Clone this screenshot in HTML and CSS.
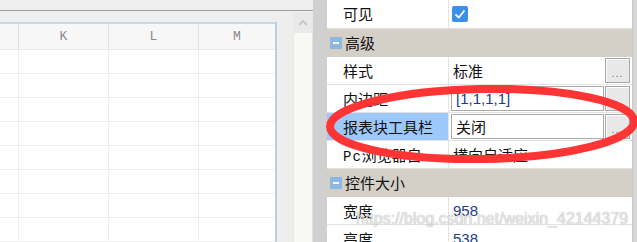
FILE: index.html
```html
<!DOCTYPE html>
<html lang="zh-CN">
<head>
  <meta charset="UTF-8">
  <title>报表属性</title>
  <link rel="stylesheet" href="styles.css">
</head>
<body>

<div class="left">
  <div class="toolbar"></div>
  <div class="workarea">
    <div class="sheet">
      <div class="sheet-row head">
        <div class="cell"></div>
        <div class="cell">K</div>
        <div class="cell">L</div>
        <div class="cell">M</div>
      </div>
      <div class="sheet-row"><div class="cell"></div><div class="cell"></div><div class="cell"></div><div class="cell"></div></div>
      <div class="sheet-row"><div class="cell"></div><div class="cell"></div><div class="cell"></div><div class="cell"></div></div>
      <div class="sheet-row"><div class="cell"></div><div class="cell"></div><div class="cell"></div><div class="cell"></div></div>
      <div class="sheet-row"><div class="cell"></div><div class="cell"></div><div class="cell"></div><div class="cell"></div></div>
      <div class="sheet-row"><div class="cell"></div><div class="cell"></div><div class="cell"></div><div class="cell"></div></div>
      <div class="sheet-row"><div class="cell"></div><div class="cell"></div><div class="cell"></div><div class="cell"></div></div>
      <div class="sheet-row"><div class="cell"></div><div class="cell"></div><div class="cell"></div><div class="cell"></div></div>
      <div class="sheet-row"><div class="cell"></div><div class="cell"></div><div class="cell"></div><div class="cell"></div></div>
    </div>
    <div class="vscroll">
      <div class="vscroll-btn">
        <svg width="12" height="8" viewBox="0 0 12 8"><path d="M2 6 L6 2 L10 6" fill="none" stroke="#c8c8c8" stroke-width="2"/></svg>
      </div>
      <div class="vscroll-track"></div>
    </div>
  </div>
</div>

<div class="splitter"></div>

<div class="props">
  <div class="prop first">
    <div class="prop-name">可见</div>
    <div class="prop-value">
      <span class="checkbox">
        <svg width="16" height="16" viewBox="0 0 16 16"><path d="M3.5 8.5 L6.8 11.5 L12.5 4.5" fill="none" stroke="#fff" stroke-width="1.8"/></svg>
      </span>
    </div>
  </div>

  <div class="group"><span class="minus"></span>高级</div>

  <div class="prop">
    <div class="prop-name">样式</div>
    <div class="prop-value"><span class="plain">标准</span><span class="dots">...</span></div>
  </div>
  <div class="prop">
    <div class="prop-name">内边距</div>
    <div class="prop-value"><span class="field num">[1,1,1,1]</span><span class="dots">...</span></div>
  </div>
  <div class="prop">
    <div class="prop-name selected">报表块工具栏</div>
    <div class="prop-value"><span class="field">关闭</span><span class="dots">...</span></div>
  </div>
  <div class="prop">
    <div class="prop-name"><span class="latin">Pc</span>浏览器自</div>
    <div class="prop-value"><span class="plain">横向自适应</span></div>
  </div>

  <div class="group"><span class="minus"></span>控件大小</div>

  <div class="prop">
    <div class="prop-name">宽度</div>
    <div class="prop-value"><span class="plain num">958</span></div>
  </div>
  <div class="prop">
    <div class="prop-name">高度</div>
    <div class="prop-value"><span class="plain num">538</span></div>
  </div>
</div>

<div class="edge"></div>

<!-- annotation drawn over the screenshot -->
<svg class="mark" width="637" height="242" viewBox="0 0 637 242">
  <ellipse cx="482" cy="124" rx="152" ry="35" fill="none" stroke="#ff3535" stroke-width="8" transform="rotate(-1 482 124)"/>
</svg>
<div class="watermark">https://blog.csdn.net/weixin_42144379</div>

</body>
</html>
```

FILE: styles.css
```css
* {
  box-sizing: border-box;
  margin: 0;
  padding: 0;
}
body {
  width: 637px;
  height: 242px;
  overflow: hidden;
  display: flex;
  position: relative;
  font-family: "Noto Sans CJK SC", "Liberation Sans", sans-serif;
  background-color: #efefef;
}

/* left: sheet designer */
.left {
  width: 313px;
  display: flex;
  flex-direction: column;
}
.toolbar {
  height: 21px;
  background-color: #efefef;
  border-bottom: 1px solid #9d9d9d;
}
.workarea {
  flex: 1;
  display: flex;
  background-color: #eeeeee;
}
.sheet {
  width: 277px;
  margin-top: 11px;
  background-color: #fff;
  border-top: 2px solid #c6d7ea;
  border-right: 2px solid #b8cde6;
}
.sheet-row {
  display: grid;
  grid-template-columns: 19px 90px 90px 1fr;
  height: 24px;
  border-bottom: 1px solid #eeeeee;
}
.sheet-row.head {
  height: 26px;
  background-color: #f7f7f7;
  border-bottom: 1px solid #e8e8e8;
}
.cell {
  border-right: 1px solid #eeeeee;
}
.head .cell {
  border-right: 1px solid #e2e2dc;
  font-family: "Liberation Mono", monospace;
  font-size: 13px;
  color: #8a8a8a;
  text-align: center;
  line-height: 25px;
}
.head .cell:last-child,
.sheet-row .cell:last-child {
  border-right: none;
}
.vscroll {
  width: 20px;
  margin-left: 16px;
  margin-top: 2px;
  display: flex;
  flex-direction: column;
}
.vscroll-btn {
  height: 20px;
  background-color: #e9e9e9;
  display: flex;
  align-items: center;
  justify-content: center;
}
.vscroll-track {
  flex: 1;
  background-color: #f8f8f5;
  border-left: 1px solid #ece7d8;
  border-right: 1px solid #e2e2e2;
}

.splitter {
  width: 14px;
  background-color: #d0d0d0;
}

/* right: property grid */
.props {
  width: 306px;
  background-color: #fff;
  border-right: 1px solid #c9c9c9;
  font-size: 15px;
  color: #111;
}
.prop {
  display: flex;
  height: 28px;
  border-bottom: 1px solid #e4e3df;
}
.prop.first {
  height: 29px;
}
.prop-name {
  width: 122px;
  padding-left: 16px;
  border-right: 1px solid #e4e3df;
  line-height: 27px;
  white-space: nowrap;
  overflow: hidden;
}
.prop-name.selected {
  background-color: #9dc9fa;
}
.latin {
  font-family: "Liberation Mono", monospace;
  font-size: 14px;
  letter-spacing: 1px;
}
.prop-value {
  flex: 1;
  display: flex;
  align-items: center;
  padding-left: 2px;
  padding-right: 2px;
}
.plain {
  flex: 1;
  padding-left: 2px;
  line-height: 27px;
}
.field {
  flex: 1;
  height: 25px;
  border: 1px solid #aaaaaa;
  padding-left: 4px;
  line-height: 23px;
}
.num {
  font-family: "Liberation Sans", sans-serif;
  font-size: 15px;
  color: #1c3b8c;
}
.dots {
  width: 25px;
  height: 25px;
  margin-left: 1px;
  background-color: #e8e8e8;
  border: 1px solid #a6a6a6;
  box-shadow: inset 1px 1px 0 #fff;
  font-family: "Liberation Sans", sans-serif;
  font-size: 11px;
  color: #777;
  text-align: center;
  line-height: 28px;
  letter-spacing: 1px;
}
.checkbox {
  width: 16px;
  height: 16px;
  margin-left: 1px;
  border-radius: 2px;
  background-color: #3d8ee7;
  display: flex;
}
.group {
  height: 28px;
  background-color: #d4d0c8;
  display: flex;
  align-items: center;
  line-height: 28px;
}
.minus {
  width: 12px;
  height: 12px;
  margin-left: 3px;
  margin-right: 3px;
  background-color: #8db7e3;
  display: flex;
  align-items: center;
  justify-content: center;
}
.minus::after {
  content: "";
  width: 6px;
  height: 2px;
  background-color: #fff;
}

.edge {
  flex: 1;
  background-color: #d8d8d8;
}

.mark {
  position: absolute;
  left: 0;
  top: 0;
}
.watermark {
  position: absolute;
  left: 356px;
  top: 210px;
  font-family: "Liberation Sans", sans-serif;
  font-size: 16px;
  color: rgba(255, 255, 255, 0.75);
  text-shadow: 0 0 1px rgba(0, 0, 0, 0.45);
  white-space: nowrap;
}
```
